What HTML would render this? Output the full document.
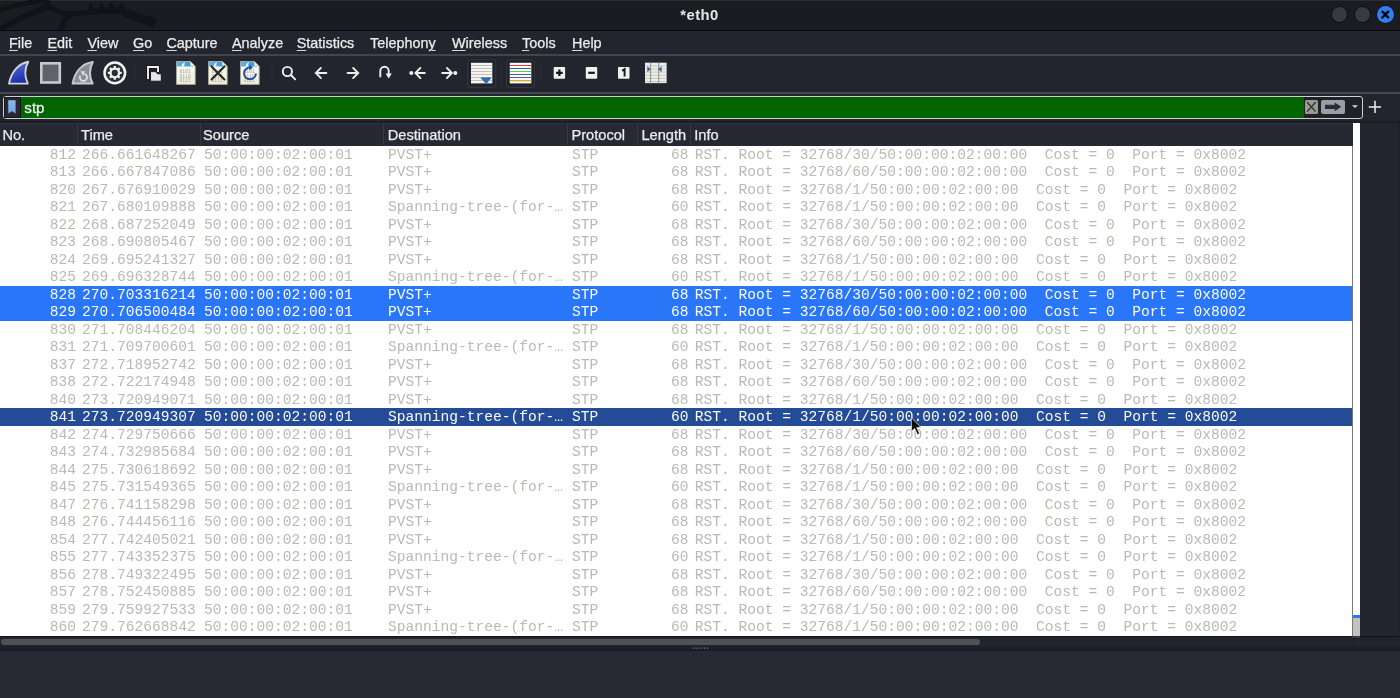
<!DOCTYPE html>
<html><head><meta charset="utf-8">
<style>
*{margin:0;padding:0;box-sizing:border-box}
html,body{width:1400px;height:698px;overflow:hidden;background:#272a34;font-family:"Liberation Sans",sans-serif}
#wrap{position:absolute;left:0;top:0;width:1400px;height:698px;overflow:hidden;will-change:transform}
.abs{position:absolute}
#title{position:absolute;left:0;top:0;width:1400px;height:30px;background:#1b1c21;border-top:1px solid #2b2c31}
#titlebd{position:absolute;left:0;top:29.5px;width:1400px;height:1.5px;background:#08090c}
#ttext{position:absolute;left:-0.5px;width:1400px;top:6.3px;text-align:center;color:#e6e6e6;font-size:14.8px;font-weight:bold;line-height:18px;letter-spacing:0.45px}
.wb{position:absolute;top:5.8px;width:17px;height:17px;border-radius:50%;background:#363a45;border:1px solid #0c0d10}
#menubar{position:absolute;left:0;top:31px;width:1400px;height:23.5px;background:#23252e}
.mi{position:absolute;top:35px;color:#ececec;font-size:14.4px;line-height:17px;-webkit-text-stroke:0.25px #ececec}
.mi u{text-decoration:underline;text-decoration-thickness:1.4px;text-underline-offset:1.6px;text-decoration-color:#d8d8d8}
#l1{position:absolute;left:0;top:54px;width:1400px;height:2px;background:#43454c}
#toolbar{position:absolute;left:0;top:56px;width:1400px;height:35.5px;background:#23252e}
#l2{position:absolute;left:0;top:91.8px;width:1400px;height:2px;background:#46484f}
#filterrow{position:absolute;left:0;top:93.8px;width:1400px;height:27.2px;background:#23252e}
#fdark{position:absolute;left:0;top:120.9px;width:1400px;height:2.2px;background:#1b1d23}
#fbox{position:absolute;left:3px;top:96px;width:1359.5px;height:23px;border:1.3px solid #cfcfcf;border-radius:3px;background:#1f2129}
#green{position:absolute;left:21px;top:97.3px;width:1283px;height:20.4px;background:#006400}
#stp{position:absolute;left:24.3px;top:99.1px;color:#f0f0f0;font-size:15.2px;line-height:17px;-webkit-text-stroke:0.3px #f0f0f0}
#header{position:absolute;left:0;top:123px;width:1352.8px;height:22.7px;background:#262933;border-top:1.8px solid #2f323b}
.hs{position:absolute;top:124px;width:1px;height:21px;background:#363944}
.ht{position:absolute;top:126.8px;color:#ececec;font-size:14.65px;line-height:17px;-webkit-text-stroke:0.25px #ececec}
#table{position:absolute;left:0;top:145.7px;width:1352.5px;height:490.3px;background:#ffffff;overflow:hidden}
.r{position:absolute;left:0;width:1352.5px;height:17.5px;font-family:"Liberation Mono",monospace;font-size:14.58px;line-height:17.5px;color:#b8bbb3;white-space:pre}
.r span{position:absolute;top:1.3px}
.r.sel{background:#2a76f9;color:#fafafa}
.r.cur{background:#244b96;color:#fafafa}
.c0{right:1276.5px;text-align:right}
.c1{left:82.1px}
.c2{left:204px}
.c3{left:388px}
.c4{left:572px}
.c5{right:663.9px;text-align:right}
.c6{left:694.8px}
#vscroll{position:absolute;left:1352.8px;top:123px;width:7.2px;height:513px;background:#ffffff}
#vbd{position:absolute;left:1352.1px;top:145.7px;width:1.2px;height:490.3px;background:#7a7a7a}
#vthumb{position:absolute;left:1353.2px;top:618px;width:6.8px;height:18px;background:#c2c2c2}
#vblue{position:absolute;left:1353.2px;top:615.3px;width:6.8px;height:2.7px;background:#2a76f9}
#rightpane{position:absolute;left:1360px;top:122.6px;width:40px;height:524px;background:#23252e}
#hsbg{position:absolute;left:0;top:636px;width:1400px;height:10px;background:#23252e;border-top:1px solid #10121a}
#hthumb{position:absolute;left:1px;top:638.7px;width:979px;height:6.2px;border-radius:3.1px;background:#505157}
#splitter{position:absolute;left:0;top:645.5px;width:1400px;height:5px;background:#1e2029}
#lower{position:absolute;left:0;top:650.5px;width:1400px;height:48px;background:#272a34}
</style></head><body>
<div id="wrap">
<div id="title"></div>
<svg class="abs" style="left:0;top:0" width="240" height="30" viewBox="0 0 240 30">
 <g fill="none" stroke="#121317" stroke-linecap="butt">
  <path d="M-4,11 C10,6 25,3 44,0" stroke-width="5"/>
  <path d="M-2,31 C14,21 30,12 50,6.5" stroke-width="5.5"/>
  <path d="M45,-1 C50,8 57,13.5 70,14 C86,13.5 104,10.5 124,11.5" stroke-width="5"/>
  <path d="M61,32 C61.5,24 64,18 71,14" stroke-width="6"/>
 </g>
 <g fill="#121317">
  <path d="M118,9 L131,10.5 L158,19.5 L153,27 L139,22.5 L124,16.5 Z"/>
  <path d="M88,12 C88,8 89,4 90,2.5 C92,6 94,9 97,11 Z M98,11 C99,7 100,4 101.5,2.5 C103,6 105,8.5 108,10 Z M108,10 C108.5,6 109.5,3 111,1.5 C113,5 116,8 119,9.5 Z M117,10 C118,6 120,3 122,2 C123,5 125,8 129,10.5 Z"/>
 </g>
</svg>
<div id="titlebd"></div>
<div id="ttext">*eth0</div>
<div class="wb" style="left:1330.6px"></div>
<div class="wb" style="left:1353.5px"></div>
<div class="abs" style="left:1376.9px;top:5.9px;width:17.4px;height:17.4px;border-radius:50%;background:#2f7ff0;box-shadow:0 0 0 0.7px #111216"></div>
<svg class="abs" style="left:1370px;top:0" width="30" height="30" viewBox="1370 0 30 30"><path d="M1382.4,11.7 L1388.2,17.5 M1388.2,11.7 L1382.4,17.5" stroke="#050505" stroke-width="2.4" stroke-linecap="round"/></svg>

<div id="menubar"></div>
<div class="mi" style="left:9px"><u>F</u>ile</div>
<div class="mi" style="left:47.5px"><u>E</u>dit</div>
<div class="mi" style="left:87.5px"><u>V</u>iew</div>
<div class="mi" style="left:133px"><u>G</u>o</div>
<div class="mi" style="left:166.4px"><u>C</u>apture</div>
<div class="mi" style="left:232px"><u>A</u>nalyze</div>
<div class="mi" style="left:296.7px"><u>S</u>tatistics</div>
<div class="mi" style="left:370px">Telephon<u>y</u></div>
<div class="mi" style="left:452px"><u>W</u>ireless</div>
<div class="mi" style="left:522px"><u>T</u>ools</div>
<div class="mi" style="left:572px"><u>H</u>elp</div>
<div id="l1"></div>
<div id="toolbar"></div>
<div id="l2"></div>
<svg class="abs" style="left:0;top:55px" width="700" height="37" viewBox="0 55 700 37">
 <defs>
  <linearGradient id="gb" x1="0" y1="0" x2="0.3" y2="1"><stop offset="0" stop-color="#5f74d8"/><stop offset="1" stop-color="#1b2fb0"/></linearGradient>
  <linearGradient id="pg" x1="0" y1="0" x2="0" y2="1"><stop offset="0" stop-color="#fbfbf6"/><stop offset="1" stop-color="#efeedb"/></linearGradient>
  <linearGradient id="gh" x1="0" y1="0" x2="1" y2="0"><stop offset="0" stop-color="#5ab4ea"/><stop offset="1" stop-color="#2a96dc"/></linearGradient>
 </defs>
 <!-- separators -->
 <g fill="#2b2d36"><rect x="134.5" y="63.5" width="1" height="20"/><rect x="271.5" y="63.5" width="1" height="20"/><rect x="501" y="63.5" width="1" height="20"/><rect x="540.5" y="63.5" width="1" height="20"/></g>
 <!-- 1 blue fin -->
 <path d="M9,83.6 L27.8,83.6 C24.3,76 24.6,68.5 28.2,61.8 C19,63.5 11.5,71 9,83.6 Z" fill="url(#gb)" stroke="#d4d4d4" stroke-width="1.9" stroke-linejoin="round"/>
 <!-- 2 stop -->
 <rect x="41.3" y="63.3" width="18.5" height="19.2" fill="#5f626b" stroke="#c7c9cf" stroke-width="2.6"/>
 <!-- 3 gray fin restart -->
 <path d="M72.6,83.6 L92.6,83.6 C89.2,77.5 89,68.5 92.8,62 C82,63.5 74.8,71.5 72.6,83.6 Z" fill="#8c8e96" stroke="#c8cacf" stroke-width="2" stroke-linejoin="round"/>
 <path d="M84.6,73.9 A3.6,3.6 0 1 1 80.3,75.6" fill="none" stroke="#d9dbe0" stroke-width="1.9"/>
 <path d="M80.4,71.3 L85.2,71.3 L83.2,76 Z" fill="#d9dbe0"/>
 <!-- 4 gear -->
 <circle cx="114.8" cy="72.9" r="10.3" fill="#2a2c33" stroke="#f2f2f2" stroke-width="2.5"/>
 <g transform="translate(114.8,72.9)" fill="#f0f0f0">
  <circle r="5.4"/>
  <rect x="-1.2" y="-6.9" width="2.4" height="13.8" rx="0.5"/>
  <rect x="-1.2" y="-6.9" width="2.4" height="13.8" rx="0.5" transform="rotate(45)"/>
  <rect x="-1.2" y="-6.9" width="2.4" height="13.8" rx="0.5" transform="rotate(90)"/>
  <rect x="-1.2" y="-6.9" width="2.4" height="13.8" rx="0.5" transform="rotate(135)"/>
  <circle r="3.1" fill="#2a2c33"/>
 </g>
 <!-- 5 open -->
 <path d="M148,79 V67 H158 V72" fill="none" stroke="#111215" stroke-width="3.4"/>
 <path d="M148,79 V67 H158 V72" fill="none" stroke="#f2f2f2" stroke-width="1.9"/>
 <path d="M150.5,81.2 V71.6 H155.6 L157.4,73.8 H161.3 V81.2 Z" fill="#e6e6e6" stroke="#111215" stroke-width="0.9"/>
 <!-- docs -->
 <g id="doc">
  <path d="M176.5,61.5 H190.3 L195.2,66.4 V84.4 H176.5 Z" fill="url(#pg)" stroke="#a9a898" stroke-width="0.9"/>
  <path d="M177,62 H190 L193.6,66.6 H177 Z" fill="url(#gh)"/>
  <path d="M181.6,66.6 C181.8,64.5 183,62.8 185.2,62.3 C184.2,63.6 184,65 184.6,66.6 Z" fill="#f4f8fb"/>
  <path d="M190.2,61.6 L190.6,66.3 H195" fill="#ecebdf" stroke="#c8c6b8" stroke-width="0.6"/>
  <g fill="#a4a49a" font-family="Liberation Mono" font-size="4.8">
   <text x="179.4" y="73">0101</text><text x="179.4" y="77.5">0110</text><text x="179.4" y="82">0111</text>
  </g>
 </g>
 <use href="#doc" x="32"/>
 <path d="M211.5,66.4 L224.4,79.4 M224.4,66.4 L211.5,79.4" stroke="#262626" stroke-width="2.1" stroke-linecap="round"/>
 <use href="#doc" x="64"/>
 <path d="M255.9,73.4 A5.9,5.9 0 1 1 250,67.5" fill="none" stroke="#1f4ea6" stroke-width="1.9"/>
 <path d="M249.3,64.6 L253,67.4 L249.3,70.2 Z" fill="#1f4ea6"/>
 <!-- 9 search -->
 <g fill="none" stroke="#f0f0f0" stroke-width="1.9" stroke-linecap="round">
  <circle cx="287.4" cy="71.5" r="4.6"/>
  <path d="M290.9,75 L295.2,79.3"/>
 <!-- 10 left -->
  <path d="M326.4,73 H316 M320.9,67.9 L315.8,73 L320.9,78.1"/>
 <!-- 11 right -->
  <path d="M347.6,73 H358 M353.1,67.9 L358.2,73 L353.1,78.1"/>
 <!-- 12 jump -->
  <path d="M380.3,77.2 V71 A4.2,4.2 0 0 1 388.7,71 V74" stroke-linecap="butt"/>
 <!-- 13 first -->
  <path d="M424.8,73 H415.6 M420.4,67.9 L415.4,73 L420.4,78.1"/>
 <!-- 14 last -->
  <path d="M442.2,73 H451.6 M446.9,67.9 L451.9,73 L446.9,78.1"/>
 </g>
 <path d="M385.6,73.5 H391.8 L388.7,78.6 Z" fill="#f0f0f0"/>
 <circle cx="411.3" cy="73" r="2" fill="#f0f0f0"/>
 <circle cx="455.3" cy="73" r="2" fill="#f0f0f0"/>
 <!-- 15 autoscroll -->
 <rect x="467.7" y="59.8" width="28" height="27.6" rx="3" fill="#21232b" stroke="#34363f" stroke-width="1.1"/>
 <rect x="471" y="62.8" width="21.3" height="20.6" fill="#f4f4f0"/>
 <g fill="#b4b4ac"><rect x="471" y="65" width="21.3" height="0.8"/><rect x="471" y="68" width="21.3" height="0.8"/><rect x="471" y="71" width="21.3" height="0.8"/><rect x="471" y="74" width="21.3" height="0.8"/><rect x="471" y="77" width="21.3" height="0.8"/><rect x="471" y="80" width="21.3" height="0.8"/></g>
 <path d="M481,77.9 H490.8 L486.2,83.6 Z" fill="#2f6bb6" stroke="#2f6bb6" stroke-width="1" stroke-linejoin="round"/>
 <!-- 16 colorize -->
 <rect x="506.5" y="59.8" width="28" height="27.6" rx="3" fill="#21232b" stroke="#34363f" stroke-width="1.1"/>
 <rect x="509.8" y="62.8" width="21.5" height="20.6" fill="#fbfbfb"/>
 <rect x="509.8" y="65" width="21.5" height="1" fill="#e83636"/>
 <rect x="509.8" y="68" width="21.5" height="1" fill="#3060b0"/>
 <rect x="509.8" y="71" width="21.5" height="1" fill="#66cc1e"/>
 <rect x="509.8" y="74" width="21.5" height="1" fill="#3060b0"/>
 <rect x="509.8" y="77" width="21.5" height="1" fill="#7a4e8a"/>
 <rect x="509.8" y="80" width="21.5" height="1.4" fill="#d6b030"/>
 <!-- 17-19 zoom -->
 <rect x="553.7" y="66.9" width="11.4" height="11.8" rx="0.8" fill="#f1f1ec"/>
 <path d="M559.4,69.5 V76.1 M556.1,72.8 H562.7" stroke="#161616" stroke-width="2.2"/>
 <rect x="585.8" y="66.9" width="11.4" height="11.8" rx="0.8" fill="#f1f1ec"/>
 <path d="M588.2,72.8 H594.8" stroke="#161616" stroke-width="2.2"/>
 <rect x="618" y="66.9" width="11.5" height="11.8" rx="0.8" fill="#f1f1ec"/>
 <path d="M622.2,70.9 L624.6,69.2 V76.6" stroke="#161616" stroke-width="1.9" fill="none"/>
 <!-- 20 resize -->
 <rect x="645" y="62.7" width="21.6" height="20.4" fill="#efefea"/>
 <g fill="#bdbdb5"><rect x="645" y="65.5" width="21.6" height="0.8"/><rect x="645" y="68.6" width="21.6" height="0.8"/><rect x="645" y="71.7" width="21.6" height="0.8"/><rect x="645" y="74.8" width="21.6" height="0.8"/><rect x="645" y="77.9" width="21.6" height="0.8"/><rect x="645" y="81" width="21.6" height="0.8"/></g>
 <rect x="650.1" y="62" width="1" height="21.8" fill="#8d8d86"/>
 <rect x="658.2" y="62" width="1" height="21.8" fill="#8d8d86"/>
 <path d="M647.3,66 L650.6,69.2 L647.3,72.2 Z" fill="#2f6bb6"/>
 <path d="M661.6,66 L658.2,69.2 L661.6,72.2 Z" fill="#2f6bb6"/>
</svg>
<div id="filterrow"></div>
<div id="fdark"></div>
<div id="fbox"></div>
<div class="abs" style="left:4.3px;top:97.2px;width:16.4px;height:20.4px;background:#262832;border:1px solid #15161c"></div>
<svg class="abs" style="left:0;top:90px" width="30" height="35" viewBox="0 90 30 35"><defs><linearGradient id="bm" x1="0" y1="0" x2="0" y2="1"><stop offset="0" stop-color="#8fb6e2"/><stop offset="1" stop-color="#6ea6e2"/></linearGradient></defs><path d="M7.9,99.9 H15.9 V114.1 L11.9,111.5 L7.9,114.1 Z" fill="url(#bm)" stroke="#1a1b22" stroke-width="0.5"/></svg>
<div id="green"></div>
<div id="stp">stp</div>
<div class="abs" style="left:1304.6px;top:100px;width:13.5px;height:13.8px;background:#9a9a92;border-radius:1.5px"></div>
<svg class="abs" style="left:1300px;top:95px" width="24" height="24" viewBox="1300 95 24 24"><path d="M1307.1,102.2 L1315.6,111.6 M1315.6,102.2 L1307.1,111.6" stroke="#30302e" stroke-width="1.35"/></svg>
<div class="abs" style="left:1321px;top:100px;width:23.7px;height:13.8px;background:#9b9ea6;border-radius:2px"></div>
<svg class="abs" style="left:1320px;top:95px" width="45" height="24" viewBox="1320 95 45 24">
 <path d="M1325.6,105.2 H1335.2 V103.4 L1340.3,106.8 L1335.2,110.2 V108.4 H1325.6 Z" fill="#2a2c35" stroke="#2a2c35" stroke-width="1.1" stroke-linejoin="round"/>
 <path d="M1351.9,105.2 H1358 L1354.95,108 Z" fill="#d4d4d4"/>
</svg>
<svg class="abs" style="left:1364px;top:96px" width="22" height="22" viewBox="1364 96 22 22"><path d="M1375,100.8 V113 M1368.8,106.9 H1381.1" stroke="#f0f0f0" stroke-width="1.5"/></svg>

<div id="header"></div>
<div class="hs" style="left:77.2px"></div>
<div class="hs" style="left:199.7px"></div>
<div class="hs" style="left:383px"></div>
<div class="hs" style="left:567.2px"></div>
<div class="hs" style="left:637.2px"></div>
<div class="hs" style="left:690.4px"></div>
<div class="ht" style="left:2.4px">No.</div>
<div class="ht" style="left:81px">Time</div>
<div class="ht" style="left:203px">Source</div>
<div class="ht" style="left:387.7px">Destination</div>
<div class="ht" style="left:571.4px">Protocol</div>
<div class="ht" style="left:641.4px">Length</div>
<div class="ht" style="left:694.3px">Info</div>

<div id="table">
<div class="r" style="top:0.00px"><span class="c0">812</span><span class="c1">266.661648267</span><span class="c2">50:00:00:02:00:01</span><span class="c3">PVST+</span><span class="c4">STP</span><span class="c5">68</span><span class="c6">RST. Root = 32768/30/50:00:00:02:00:00  Cost = 0  Port = 0x8002</span></div>
<div class="r" style="top:17.50px"><span class="c0">813</span><span class="c1">266.667847086</span><span class="c2">50:00:00:02:00:01</span><span class="c3">PVST+</span><span class="c4">STP</span><span class="c5">68</span><span class="c6">RST. Root = 32768/60/50:00:00:02:00:00  Cost = 0  Port = 0x8002</span></div>
<div class="r" style="top:35.00px"><span class="c0">820</span><span class="c1">267.676910029</span><span class="c2">50:00:00:02:00:01</span><span class="c3">PVST+</span><span class="c4">STP</span><span class="c5">68</span><span class="c6">RST. Root = 32768/1/50:00:00:02:00:00  Cost = 0  Port = 0x8002</span></div>
<div class="r" style="top:52.50px"><span class="c0">821</span><span class="c1">267.680109888</span><span class="c2">50:00:00:02:00:01</span><span class="c3">Spanning-tree-(for-…</span><span class="c4">STP</span><span class="c5">60</span><span class="c6">RST. Root = 32768/1/50:00:00:02:00:00  Cost = 0  Port = 0x8002</span></div>
<div class="r" style="top:70.00px"><span class="c0">822</span><span class="c1">268.687252049</span><span class="c2">50:00:00:02:00:01</span><span class="c3">PVST+</span><span class="c4">STP</span><span class="c5">68</span><span class="c6">RST. Root = 32768/30/50:00:00:02:00:00  Cost = 0  Port = 0x8002</span></div>
<div class="r" style="top:87.50px"><span class="c0">823</span><span class="c1">268.690805467</span><span class="c2">50:00:00:02:00:01</span><span class="c3">PVST+</span><span class="c4">STP</span><span class="c5">68</span><span class="c6">RST. Root = 32768/60/50:00:00:02:00:00  Cost = 0  Port = 0x8002</span></div>
<div class="r" style="top:105.00px"><span class="c0">824</span><span class="c1">269.695241327</span><span class="c2">50:00:00:02:00:01</span><span class="c3">PVST+</span><span class="c4">STP</span><span class="c5">68</span><span class="c6">RST. Root = 32768/1/50:00:00:02:00:00  Cost = 0  Port = 0x8002</span></div>
<div class="r" style="top:122.50px"><span class="c0">825</span><span class="c1">269.696328744</span><span class="c2">50:00:00:02:00:01</span><span class="c3">Spanning-tree-(for-…</span><span class="c4">STP</span><span class="c5">60</span><span class="c6">RST. Root = 32768/1/50:00:00:02:00:00  Cost = 0  Port = 0x8002</span></div>
<div class="r sel" style="top:140.00px"><span class="c0">828</span><span class="c1">270.703316214</span><span class="c2">50:00:00:02:00:01</span><span class="c3">PVST+</span><span class="c4">STP</span><span class="c5">68</span><span class="c6">RST. Root = 32768/30/50:00:00:02:00:00  Cost = 0  Port = 0x8002</span></div>
<div class="r sel" style="top:157.50px"><span class="c0">829</span><span class="c1">270.706500484</span><span class="c2">50:00:00:02:00:01</span><span class="c3">PVST+</span><span class="c4">STP</span><span class="c5">68</span><span class="c6">RST. Root = 32768/60/50:00:00:02:00:00  Cost = 0  Port = 0x8002</span></div>
<div class="r" style="top:175.00px"><span class="c0">830</span><span class="c1">271.708446204</span><span class="c2">50:00:00:02:00:01</span><span class="c3">PVST+</span><span class="c4">STP</span><span class="c5">68</span><span class="c6">RST. Root = 32768/1/50:00:00:02:00:00  Cost = 0  Port = 0x8002</span></div>
<div class="r" style="top:192.50px"><span class="c0">831</span><span class="c1">271.709700601</span><span class="c2">50:00:00:02:00:01</span><span class="c3">Spanning-tree-(for-…</span><span class="c4">STP</span><span class="c5">60</span><span class="c6">RST. Root = 32768/1/50:00:00:02:00:00  Cost = 0  Port = 0x8002</span></div>
<div class="r" style="top:210.00px"><span class="c0">837</span><span class="c1">272.718952742</span><span class="c2">50:00:00:02:00:01</span><span class="c3">PVST+</span><span class="c4">STP</span><span class="c5">68</span><span class="c6">RST. Root = 32768/30/50:00:00:02:00:00  Cost = 0  Port = 0x8002</span></div>
<div class="r" style="top:227.50px"><span class="c0">838</span><span class="c1">272.722174948</span><span class="c2">50:00:00:02:00:01</span><span class="c3">PVST+</span><span class="c4">STP</span><span class="c5">68</span><span class="c6">RST. Root = 32768/60/50:00:00:02:00:00  Cost = 0  Port = 0x8002</span></div>
<div class="r" style="top:245.00px"><span class="c0">840</span><span class="c1">273.720949071</span><span class="c2">50:00:00:02:00:01</span><span class="c3">PVST+</span><span class="c4">STP</span><span class="c5">68</span><span class="c6">RST. Root = 32768/1/50:00:00:02:00:00  Cost = 0  Port = 0x8002</span></div>
<div class="r cur" style="top:262.50px"><span class="c0">841</span><span class="c1">273.720949307</span><span class="c2">50:00:00:02:00:01</span><span class="c3">Spanning-tree-(for-…</span><span class="c4">STP</span><span class="c5">60</span><span class="c6">RST. Root = 32768/1/50:00:00:02:00:00  Cost = 0  Port = 0x8002</span></div>
<div class="r" style="top:280.00px"><span class="c0">842</span><span class="c1">274.729750666</span><span class="c2">50:00:00:02:00:01</span><span class="c3">PVST+</span><span class="c4">STP</span><span class="c5">68</span><span class="c6">RST. Root = 32768/30/50:00:00:02:00:00  Cost = 0  Port = 0x8002</span></div>
<div class="r" style="top:297.50px"><span class="c0">843</span><span class="c1">274.732985684</span><span class="c2">50:00:00:02:00:01</span><span class="c3">PVST+</span><span class="c4">STP</span><span class="c5">68</span><span class="c6">RST. Root = 32768/60/50:00:00:02:00:00  Cost = 0  Port = 0x8002</span></div>
<div class="r" style="top:315.00px"><span class="c0">844</span><span class="c1">275.730618692</span><span class="c2">50:00:00:02:00:01</span><span class="c3">PVST+</span><span class="c4">STP</span><span class="c5">68</span><span class="c6">RST. Root = 32768/1/50:00:00:02:00:00  Cost = 0  Port = 0x8002</span></div>
<div class="r" style="top:332.50px"><span class="c0">845</span><span class="c1">275.731549365</span><span class="c2">50:00:00:02:00:01</span><span class="c3">Spanning-tree-(for-…</span><span class="c4">STP</span><span class="c5">60</span><span class="c6">RST. Root = 32768/1/50:00:00:02:00:00  Cost = 0  Port = 0x8002</span></div>
<div class="r" style="top:350.00px"><span class="c0">847</span><span class="c1">276.741158298</span><span class="c2">50:00:00:02:00:01</span><span class="c3">PVST+</span><span class="c4">STP</span><span class="c5">68</span><span class="c6">RST. Root = 32768/30/50:00:00:02:00:00  Cost = 0  Port = 0x8002</span></div>
<div class="r" style="top:367.50px"><span class="c0">848</span><span class="c1">276.744456116</span><span class="c2">50:00:00:02:00:01</span><span class="c3">PVST+</span><span class="c4">STP</span><span class="c5">68</span><span class="c6">RST. Root = 32768/60/50:00:00:02:00:00  Cost = 0  Port = 0x8002</span></div>
<div class="r" style="top:385.00px"><span class="c0">854</span><span class="c1">277.742405021</span><span class="c2">50:00:00:02:00:01</span><span class="c3">PVST+</span><span class="c4">STP</span><span class="c5">68</span><span class="c6">RST. Root = 32768/1/50:00:00:02:00:00  Cost = 0  Port = 0x8002</span></div>
<div class="r" style="top:402.50px"><span class="c0">855</span><span class="c1">277.743352375</span><span class="c2">50:00:00:02:00:01</span><span class="c3">Spanning-tree-(for-…</span><span class="c4">STP</span><span class="c5">60</span><span class="c6">RST. Root = 32768/1/50:00:00:02:00:00  Cost = 0  Port = 0x8002</span></div>
<div class="r" style="top:420.00px"><span class="c0">856</span><span class="c1">278.749322495</span><span class="c2">50:00:00:02:00:01</span><span class="c3">PVST+</span><span class="c4">STP</span><span class="c5">68</span><span class="c6">RST. Root = 32768/30/50:00:00:02:00:00  Cost = 0  Port = 0x8002</span></div>
<div class="r" style="top:437.50px"><span class="c0">857</span><span class="c1">278.752450885</span><span class="c2">50:00:00:02:00:01</span><span class="c3">PVST+</span><span class="c4">STP</span><span class="c5">68</span><span class="c6">RST. Root = 32768/60/50:00:00:02:00:00  Cost = 0  Port = 0x8002</span></div>
<div class="r" style="top:455.00px"><span class="c0">859</span><span class="c1">279.759927533</span><span class="c2">50:00:00:02:00:01</span><span class="c3">PVST+</span><span class="c4">STP</span><span class="c5">68</span><span class="c6">RST. Root = 32768/1/50:00:00:02:00:00  Cost = 0  Port = 0x8002</span></div>
<div class="r" style="top:472.50px"><span class="c0">860</span><span class="c1">279.762668842</span><span class="c2">50:00:00:02:00:01</span><span class="c3">Spanning-tree-(for-…</span><span class="c4">STP</span><span class="c5">60</span><span class="c6">RST. Root = 32768/1/50:00:00:02:00:00  Cost = 0  Port = 0x8002</span></div></div>
<div id="vscroll"></div>
<div id="vbd"></div>
<div id="vblue"></div>
<div id="vthumb"></div>
<div id="rightpane"></div>
<div class="abs" style="left:1399px;top:123px;width:1px;height:523px;background:#1d1f26"></div>
<div id="hsbg"></div>
<div id="hthumb"></div>
<div class="abs" style="left:1352.3px;top:636px;width:7.7px;height:1.5px;background:#3a3b40"></div>
<div class="abs" style="left:1352.5px;top:637.5px;width:47.5px;height:8px;background:#23252d;border-left:1px solid #1b1d24;border-top:1px solid #1b1d24"></div>
<div id="splitter"></div>
<div class="abs" style="left:0;top:650px;width:1400px;height:1px;background:#191b22"></div>
<div id="lower"></div>
<svg class="abs" style="left:690px;top:646px" width="22" height="4" viewBox="0 0 22 4"><g fill="#9a9ca2"><rect x="2.8" y="1.6" width="1" height="1"/><rect x="5.6" y="1.6" width="1" height="1"/><rect x="8.4" y="1.6" width="1" height="1"/><rect x="11.2" y="1.6" width="1" height="1"/><rect x="14" y="1.6" width="1" height="1"/><rect x="16.8" y="1.6" width="1" height="1"/></g></svg>
<svg class="abs" style="left:900px;top:410px" width="30" height="30" viewBox="900 410 30 30"><path d="M911.3,417.6 L911.6,431.2 L914.6,428.4 L917.6,434.6 L919.6,433.6 L916.7,427.6 L920.8,427.4 Z" fill="#0d0d0d" stroke="#e8e8e8" stroke-width="0.7" stroke-linejoin="round"/></svg>
</div>
</body></html>
